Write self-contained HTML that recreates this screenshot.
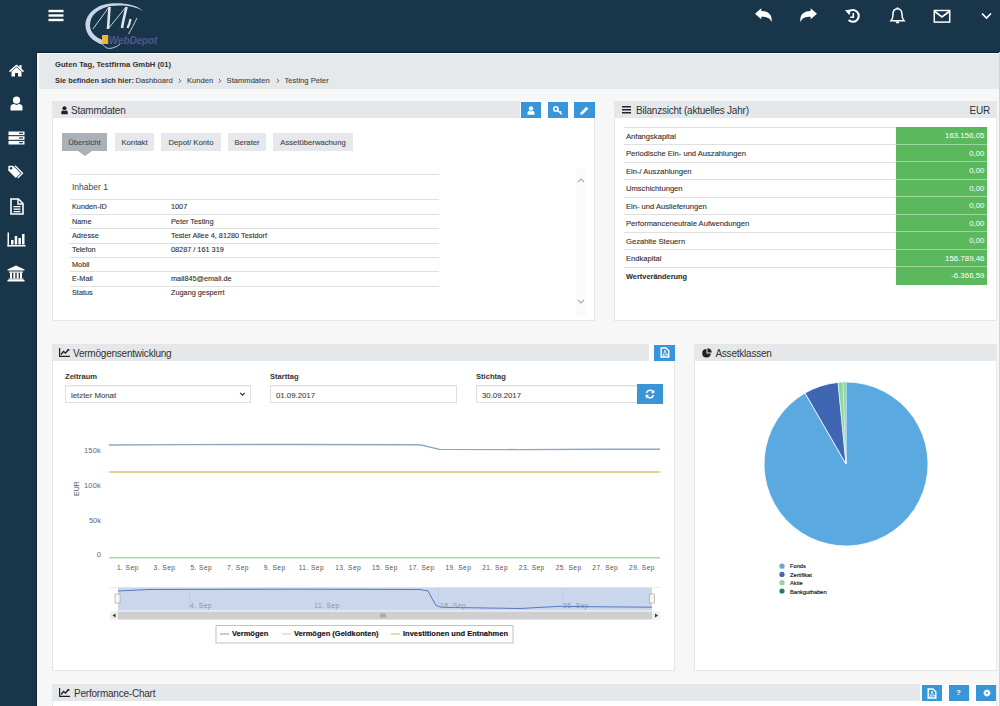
<!DOCTYPE html>
<html><head><meta charset="utf-8">
<style>
*{box-sizing:border-box;margin:0;padding:0}
html,body{width:1000px;height:706px;overflow:hidden;background:#f7f7f7;font-family:"Liberation Sans",sans-serif;color:#333}
.abs{position:absolute}
svg{position:absolute;overflow:visible}
#hdr{left:0;top:0;width:1000px;height:53px;background:#193549;border-bottom:1px solid #0d2232}
#side{left:0;top:52px;width:37px;height:654px;background:#193549;border-right:1px solid #0f2536}
#greet{left:38.5px;top:54px;width:961.5px;height:35px;background:#e5e9eb}
.panel{position:absolute;background:#fff;border:1px solid #e6e6e6}
.ph{position:absolute;left:0;top:0;right:0;height:16px;background:#e4e8eb;font-size:10px;color:#333}
.ph .t{position:absolute;top:3px;white-space:nowrap;letter-spacing:-0.22px}
.btn{position:absolute;background:#3895d8;height:16px;top:0}
.bw{position:absolute;top:-1px;right:0;height:17px;background:#fbfcfd}
.tab{-webkit-text-stroke:0.1px #444;position:absolute;top:133px;height:18px;background:#e6e8eb;font-size:7.7px;color:#444;text-align:center;line-height:20px;white-space:nowrap}
.hl{position:absolute;left:70px;width:369px;height:1px;background:#e0e0e0}
.lbl{-webkit-text-stroke:0.12px #333;position:absolute;font-size:7.3px;color:#333;white-space:nowrap;line-height:9px}
.brow{position:absolute;left:624px;width:363px;height:1px;background:#e0e0e0}
.bl{-webkit-text-stroke:0.12px #333;position:absolute;left:626px;font-size:7.6px;color:#333;white-space:nowrap;line-height:9px}
.g{position:absolute;left:896px;width:91px;height:16.5px;background:#5cb85c;color:#fff;font-size:7.9px;text-align:right;padding-right:2.5px;line-height:17.5px}
.gs{position:absolute;left:896px;width:91px;height:1px;background:#9ad79a}
.xl{position:absolute;top:564px;width:40px;text-align:center;font-size:6.6px;color:#555;white-space:nowrap;letter-spacing:0.45px}
.yl{position:absolute;font-size:7.5px;color:#666;white-space:nowrap;text-align:right;width:30px}
.fl{position:absolute;margin-top:1px;font-size:7.6px;font-weight:bold;color:#333;white-space:nowrap}
.inp{-webkit-text-stroke:0.1px #444;position:absolute;top:384.6px;height:18.6px;background:#fff;border:1px solid #e0e0e0;box-shadow:inset 0 1px 1px rgba(0,0,0,.05);font-size:7.8px;color:#444;line-height:19.5px;padding-left:5px;white-space:nowrap}
.leg{-webkit-text-stroke:0.15px #111;position:absolute;font-size:7.5px;font-weight:bold;color:#111;white-space:nowrap;top:628.8px}
.bc{-webkit-text-stroke:0.1px #444;top:75.5px;font-size:7.6px;color:#444;white-space:nowrap}
.bcs{top:73px;font-size:9.5px;color:#555;white-space:nowrap}
.pl{position:absolute;left:790px;font-size:5.7px;color:#111;white-space:nowrap;-webkit-text-stroke:0.15px #111}
</style></head><body>
<div id="hdr" class="abs"></div>
<div id="side" class="abs"></div>
<div id="greet" class="abs"></div>
<div class="abs" style="left:999px;top:52px;width:1px;height:654px;background:#d4d4d4"></div>

<!-- header icons -->
<svg style="left:48px;top:9px" width="16" height="13" viewBox="0 0 16 13"><rect x="0.5" y="0.8" width="15" height="2.4" fill="#fff"/><rect x="0.5" y="5.3" width="15" height="2.4" fill="#fff"/><rect x="0.5" y="9.8" width="15" height="2.4" fill="#fff"/></svg>

<!-- logo -->
<svg style="left:80px;top:0" width="85" height="52" viewBox="0 0 85 52">
  <path d="M63 11 C55 3.5 42 2.5 30 3.5 C15 5 5 15 5.5 26 C6 35 13 41.5 22 44.5 L22.5 40 C15 37 10 32 10 25 C10 15 19 8 31 6 C43 4.5 55 6 63 11Z" fill="#c6d6e8"/>
  <path d="M22 43 C24 47 27 49 31 48.3 C35 47.5 38 46 40 44" fill="none" stroke="#b9cbe0" stroke-width="1"/>
  <path d="M13 29 L29 7" stroke="#dde6ef" stroke-width="0.9" fill="none"/>
  <path d="M29.5 7 C29 14 28.5 21 28 29" stroke="#dde6ef" stroke-width="2.6" fill="none"/>
  <path d="M28 29 L46 7" stroke="#dde6ef" stroke-width="0.9" fill="none"/>
  <path d="M46.5 7 C45 14 43 21 42 28" stroke="#dde6ef" stroke-width="2.6" fill="none"/>
  <path d="M50.5 19 C50 23 48.5 26 47.5 28" stroke="#dde6ef" stroke-width="2.2" fill="none"/>
  <path d="M57 18 C54 24 51 30 48.5 34" stroke="#dde6ef" stroke-width="0.9" fill="none"/>
  <rect x="22" y="35" width="6.2" height="9" fill="#efb43a"/>
  <text x="28.8" y="44" font-family="Liberation Sans" font-style="italic" font-weight="bold" font-size="10" fill="#50568e" letter-spacing="-0.1">WebDepot</text>
</svg>

<svg style="left:755px;top:8px" width="17" height="15" viewBox="0 0 17 15"><path d="M0 5.8 L6.3 0.3 V3 C12.5 3 17.8 6 16.5 14.2 C15 9.8 11.5 8.8 6.3 8.8 V11.3 Z" fill="#fff"/></svg>
<svg style="left:800px;top:8px" width="17" height="15" viewBox="0 0 17 15"><path d="M17 5.8 L10.7 0.3 V3 C4.5 3 -0.8 6 0.5 14.2 C2 9.8 5.5 8.8 10.7 8.8 V11.3 Z" fill="#fff"/></svg>
<svg style="left:844px;top:8px" width="18" height="18" viewBox="0 0 18 18"><path d="M5 3.4 A5.9 5.9 0 1 1 4.6 12" fill="none" stroke="#fff" stroke-width="2"/><path d="M1 2.3 L6.6 1.6 L5.6 7.2 Z" fill="#fff"/><path d="M9.3 5 V9.3 H6.2" fill="none" stroke="#fff" stroke-width="1.6"/></svg>
<svg style="left:889px;top:7px" width="17" height="18" viewBox="0 0 17 18"><path d="M8.5 1.8 C5.5 1.8 4 4 4 7.5 C4 11 3.2 12.5 2 13.8 H15 C13.8 12.5 13 11 13 7.5 C13 4 11.5 1.8 8.5 1.8Z" fill="none" stroke="#fff" stroke-width="1.5"/><circle cx="8.5" cy="1.3" r="1" fill="#fff"/><path d="M6.5 14.5 A2 2 0 0 0 10.5 14.5Z" fill="#fff"/></svg>
<svg style="left:933px;top:9px" width="18" height="14" viewBox="0 0 18 14"><rect x="1.3" y="1.5" width="15.4" height="11.6" fill="none" stroke="#fff" stroke-width="1.5"/><path d="M1.8 2.5 L9 8 L16.2 2.5" fill="none" stroke="#fff" stroke-width="1.6"/></svg>
<svg style="left:981px;top:12px" width="11" height="8" viewBox="0 0 11 8"><path d="M1 1.5 L5.5 6 L10 1.5" fill="none" stroke="#fff" stroke-width="1.7"/></svg>

<!-- sidebar icons -->
<svg style="left:9px;top:64px" width="15" height="13" viewBox="0 0 15 13"><path d="M7.5 0.5 L0 7 L1 8.2 L7.5 2.6 L14 8.2 L15 7 L12.5 4.8 V1 H10.5 V3 Z" fill="#fff"/><path d="M2.5 7.5 L7.5 3.3 L12.5 7.5 V12.6 H9 V9 H6 V12.6 H2.5Z" fill="#fff"/></svg>
<svg style="left:10px;top:96px" width="13" height="15" viewBox="0 0 13 15"><circle cx="6.5" cy="4.2" r="3.6" fill="#fff"/><path d="M0.5 14.5 V11 C0.5 8.8 2.5 8 4 8 L6.5 9 L9 8 C10.5 8 12.5 8.8 12.5 11 V14.5Z" fill="#fff"/></svg>
<svg style="left:8px;top:131px" width="17" height="14" viewBox="0 0 17 14"><rect x="0.5" y="0.5" width="16" height="3.6" fill="#fff"/><rect x="0.5" y="5.2" width="16" height="3.6" fill="#fff"/><rect x="0.5" y="9.9" width="16" height="3.6" fill="#fff"/><rect x="11" y="1.7" width="4" height="1.2" fill="#193549"/><rect x="11" y="6.4" width="4" height="1.2" fill="#193549"/><rect x="11" y="11.1" width="4" height="1.2" fill="#193549"/></svg>
<svg style="left:8px;top:165px" width="17" height="14" viewBox="0 0 17 14"><path d="M0.3 1.5 V5.5 L7.8 13 L12.5 8.3 L5 0.8 H1 Z" fill="#fff"/><circle cx="3" cy="3.3" r="1.2" fill="#193549"/><path d="M7 0.8 L14.5 8.3 L9.8 13" fill="none" stroke="#fff" stroke-width="1.3"/></svg>
<svg style="left:10px;top:198px" width="14" height="17" viewBox="0 0 14 17"><path d="M1 1 H8.5 L13 5.5 V16 H1Z" fill="none" stroke="#fff" stroke-width="1.6"/><path d="M8 1 V6 H13" fill="none" stroke="#fff" stroke-width="1.4"/><rect x="3.5" y="8" width="7" height="1.3" fill="#fff"/><rect x="3.5" y="10.5" width="7" height="1.3" fill="#fff"/><rect x="3.5" y="13" width="7" height="1.3" fill="#fff"/></svg>
<svg style="left:7px;top:232px" width="19" height="15" viewBox="0 0 19 15"><rect x="0.5" y="0.5" width="1.5" height="14" fill="#fff"/><rect x="0.5" y="13" width="18" height="1.5" fill="#fff"/><rect x="4" y="8" width="2.5" height="4.5" fill="#fff"/><rect x="7.7" y="4" width="2.5" height="8.5" fill="#fff"/><rect x="11.4" y="6" width="2.5" height="6.5" fill="#fff"/><rect x="15" y="2" width="2.5" height="10.5" fill="#fff"/></svg>
<svg style="left:7px;top:265px" width="18" height="17" viewBox="0 0 18 17"><path d="M9 0.5 L17.5 4.5 V5.5 H0.5 V4.5Z" fill="#fff"/><rect x="2" y="6.5" width="14" height="1.2" fill="#fff"/><rect x="3" y="7.5" width="2" height="6" fill="#fff"/><rect x="6.3" y="7.5" width="2" height="6" fill="#fff"/><rect x="9.7" y="7.5" width="2" height="6" fill="#fff"/><rect x="13" y="7.5" width="2" height="6" fill="#fff"/><rect x="1.5" y="13.5" width="15" height="1.3" fill="#fff"/><rect x="0.5" y="15" width="17" height="1.5" fill="#fff"/></svg>

<div class="abs" style="left:55px;top:59.5px;font-size:7.65px;font-weight:bold;color:#333;white-space:nowrap">Guten Tag, Testfirma GmbH (01)</div>
<div class="abs" style="left:55px;top:75.5px;font-size:7.4px;font-weight:bold;color:#333;white-space:nowrap">Sie befinden sich hier:</div>
<div class="abs bc" style="left:135.5px">Dashboard</div><svg style="left:177.7px;top:78px" width="4" height="6" viewBox="0 0 4 6"><path d="M0.8 0.8 L2.8 2.8 L0.8 4.8" fill="none" stroke="#555" stroke-width="0.9"/></svg>
<div class="abs bc" style="left:187px">Kunden</div><svg style="left:217.7px;top:78px" width="4" height="6" viewBox="0 0 4 6"><path d="M0.8 0.8 L2.8 2.8 L0.8 4.8" fill="none" stroke="#555" stroke-width="0.9"/></svg>
<div class="abs bc" style="left:226.6px">Stammdaten</div><svg style="left:275.7px;top:78px" width="4" height="6" viewBox="0 0 4 6"><path d="M0.8 0.8 L2.8 2.8 L0.8 4.8" fill="none" stroke="#555" stroke-width="0.9"/></svg>
<div class="abs bc" style="left:284.5px">Testing Peter</div>

<!-- Stammdaten panel -->
<div class="panel" style="left:52px;top:101px;width:543px;height:220px">
  <div class="ph"><span class="t" style="left:18px">Stammdaten</span>
  <div class="bw" style="left:466.5px"></div>
  <div class="btn" style="left:468px;width:20px"></div>
  <div class="btn" style="left:495px;width:20px"></div>
  <div class="btn" style="left:521px;width:21px"></div>
  </div>
</div>
<svg style="left:61px;top:106px" width="7" height="8.5" viewBox="0 0 8 10"><circle cx="4" cy="2.6" r="2.4" fill="#222"/><path d="M0.2 9.6 V7.3 C0.2 5.8 1.3 5.2 2.3 5.2 L4 6 L5.7 5.2 C6.7 5.2 7.8 5.8 7.8 7.3 V9.6Z" fill="#222"/></svg>
<!-- button icons -->
<svg style="left:527px;top:105.5px" width="8" height="9" viewBox="0 0 8 9"><circle cx="4" cy="2.5" r="2.2" fill="#fff"/><path d="M0.5 8.8 V6.8 C0.5 5.5 1.5 4.9 2.4 4.9 L4 5.6 L5.6 4.9 C6.5 4.9 7.5 5.5 7.5 6.8 V8.8Z" fill="#fff"/></svg>
<svg style="left:553px;top:106px" width="10" height="9" viewBox="0 0 10 9"><circle cx="2.9" cy="2.9" r="2.1" fill="none" stroke="#fff" stroke-width="1.6"/><path d="M4.3 4.3 L8.8 8.3 M6.8 6.6 L8 5.4" stroke="#fff" stroke-width="1.5"/></svg>
<svg style="left:580px;top:106px" width="9" height="9" viewBox="0 0 9 9"><path d="M0.3 8.7 L0.8 6.2 L6.3 0.7 L8.3 2.7 L2.8 8.2 Z" fill="#fff"/></svg>

<div class="tab" style="left:62px;width:45px;background:#aab1b9;color:#4a4f55">Übersicht</div>
<svg style="left:77.5px;top:151px" width="14" height="5" viewBox="0 0 14 5"><path d="M0 0 H14 L7 5Z" fill="#aab1b9"/></svg>
<div class="tab" style="left:115px;width:39px">Kontakt</div>
<div class="tab" style="left:161px;width:60px">Depot/ Konto</div>
<div class="tab" style="left:228px;width:38px">Berater</div>
<div class="tab" style="left:273px;width:80px">Assetüberwachung</div>

<div class="hl" style="top:174px"></div>
<div class="lbl" style="left:72px;top:182px;font-size:8.5px;line-height:10px;color:#444;-webkit-text-stroke:0">Inhaber 1</div>
<div class="hl" style="top:199px"></div>
<div class="lbl" style="left:72px;top:202px">Kunden-ID</div><div class="lbl" style="left:171px;top:202px">1007</div>
<div class="hl" style="top:213.5px"></div>
<div class="lbl" style="left:72px;top:216.5px">Name</div><div class="lbl" style="left:171px;top:216.5px">Peter Testing</div>
<div class="hl" style="top:228px"></div>
<div class="lbl" style="left:72px;top:231px">Adresse</div><div class="lbl" style="left:171px;top:231px">Tester Allee 4, 81280 Testdorf</div>
<div class="hl" style="top:242.5px"></div>
<div class="lbl" style="left:72px;top:245px">Telefon</div><div class="lbl" style="left:171px;top:245px">08287 / 161 319</div>
<div class="hl" style="top:256.5px"></div>
<div class="lbl" style="left:72px;top:259.5px">Mobil</div>
<div class="hl" style="top:271px"></div>
<div class="lbl" style="left:72px;top:273.5px">E-Mail</div><div class="lbl" style="left:171px;top:273.5px">mail845@email.de</div>
<div class="hl" style="top:285.5px"></div>
<div class="lbl" style="left:72px;top:288px">Status</div><div class="lbl" style="left:171px;top:288px">Zugang gesperrt</div>
<!-- scrollbar -->
<div class="abs" style="left:576px;top:168px;width:10px;height:148px;background:#fafafa"></div>
<svg style="left:577px;top:178px" width="8" height="5" viewBox="0 0 8 5"><path d="M1 4 L4 1 L7 4" fill="none" stroke="#aaa" stroke-width="1.1"/></svg>
<svg style="left:577px;top:299px" width="8" height="5" viewBox="0 0 8 5"><path d="M1 1 L4 4 L7 1" fill="none" stroke="#aaa" stroke-width="1.1"/></svg>

<!-- Bilanzsicht panel -->
<div class="panel" style="left:614px;top:101px;width:383px;height:220px">
  <div class="ph"><span class="t" style="left:21px">Bilanzsicht (aktuelles Jahr)</span><span class="t" style="right:6px">EUR</span></div>
</div>
<svg style="left:622px;top:105px" width="9" height="9" viewBox="0 0 9 9"><rect x="0" y="1" width="9" height="1.5" fill="#222"/><rect x="0" y="4" width="9" height="1.5" fill="#222"/><rect x="0" y="7" width="9" height="1.5" fill="#222"/></svg>
<div class="brow" style="top:126.5px"></div>
<div class="bl" style="top:131.8px">Anfangskapital</div><div class="g" style="top:127px">163.156,05</div>
<div class="brow" style="top:144px"></div><div class="gs" style="top:143.5px"></div>
<div class="bl" style="top:149.3px">Periodische Ein- und Auszahlungen</div><div class="g" style="top:144.5px">0,00</div>
<div class="brow" style="top:161.5px"></div><div class="gs" style="top:161px"></div>
<div class="bl" style="top:166.8px">Ein-/ Auszahlungen</div><div class="g" style="top:162px">0,00</div>
<div class="brow" style="top:179px"></div><div class="gs" style="top:178.5px"></div>
<div class="bl" style="top:184.3px">Umschichtungen</div><div class="g" style="top:179.5px">0,00</div>
<div class="brow" style="top:196.5px"></div><div class="gs" style="top:196px"></div>
<div class="bl" style="top:201.8px">Ein- und Auslieferungen</div><div class="g" style="top:197px">0,00</div>
<div class="brow" style="top:214px"></div><div class="gs" style="top:213.5px"></div>
<div class="bl" style="top:219.3px">Performanceneutrale Aufwendungen</div><div class="g" style="top:214.5px">0,00</div>
<div class="brow" style="top:231.5px"></div><div class="gs" style="top:231px"></div>
<div class="bl" style="top:236.8px">Gezahlte Steuern</div><div class="g" style="top:232px">0,00</div>
<div class="brow" style="top:249px"></div><div class="gs" style="top:248.5px"></div>
<div class="bl" style="top:254.3px">Endkapital</div><div class="g" style="top:249.5px">156.789,46</div>
<div class="brow" style="top:266.5px"></div><div class="gs" style="top:266px"></div>
<div class="bl" style="top:271.8px;font-weight:bold;font-size:7.4px">Wertveränderung</div><div class="g" style="top:267px;height:18px;line-height:18.5px">-6.366,59</div>

<!-- Vermoegen panel -->
<div class="panel" style="left:52px;top:344px;width:623px;height:327px">
  <div class="ph"><span class="t" style="left:20px">Vermögensentwicklung</span>
  <div class="bw" style="left:595.5px"></div>
  <div class="btn" style="left:601px;width:21px"></div></div>
</div>
<svg style="left:59px;top:348px" width="11" height="9" viewBox="0 0 11 9"><path d="M0.6 0 V8.3 H11" fill="none" stroke="#222" stroke-width="1.2"/><path d="M2 6.5 L4.5 3.5 L6.5 5 L9.5 1.5" fill="none" stroke="#222" stroke-width="1.3"/><path d="M8 1 H10.3 V3.3Z" fill="#222"/></svg>
<svg style="left:659.5px;top:347px" width="10" height="11" viewBox="0 0 10 11"><path d="M1.2 1 H6 L8.8 3.8 V10 H1.2Z" fill="none" stroke="#fff" stroke-width="1.4"/><path d="M3 8.5 C4 6 5 4 5 3 C5 5 6 7 8 8 C6 7.5 4 8 3 8.5Z" fill="none" stroke="#fff" stroke-width="0.8"/></svg>

<div class="fl" style="top:371px;left:65px">Zeitraum</div>
<div class="fl" style="top:371px;left:270px">Starttag</div>
<div class="fl" style="top:371px;left:476px">Stichtag</div>
<div class="inp" style="left:65px;width:186px">letzter Monat</div>
<svg style="left:238.8px;top:392.3px" width="7" height="5" viewBox="0 0 7 5"><path d="M1.2 0.9 L3.5 3.2 L5.8 0.9" fill="none" stroke="#333" stroke-width="1.3"/></svg>
<div class="inp" style="left:270px;width:187px">01.09.2017</div>
<div class="inp" style="left:476px;width:162px">30.09.2017</div>
<div class="abs" style="left:637px;top:384px;width:26px;height:20px;background:#3895d8"></div>
<svg style="left:645px;top:389px" width="10" height="10" viewBox="0 0 10 10"><path d="M1.5 4 A3.7 3.7 0 0 1 8.3 3" fill="none" stroke="#fff" stroke-width="1.5"/><path d="M8.5 6 A3.7 3.7 0 0 1 1.7 7" fill="none" stroke="#fff" stroke-width="1.5"/><path d="M9.3 0.8 V4.2 H6Z" fill="#fff"/><path d="M0.7 9.2 V5.8 H4Z" fill="#fff"/></svg>

<!-- Assetklassen -->
<div class="panel" style="left:694px;top:344px;width:303px;height:327px">
  <div class="ph"><span class="t" style="left:20.4px">Assetklassen</span></div>
</div>
<!-- chart -->
<div class="yl" style="left:71px;top:445.5px;letter-spacing:0.2px">150k</div>
<div class="yl" style="left:71px;top:481px;letter-spacing:0.2px">100k</div>
<div class="yl" style="left:71px;top:515.5px">50k</div>
<div class="yl" style="left:71px;top:550px">0</div>
<div class="abs" style="left:69px;top:485px;font-size:7px;color:#555;transform:rotate(-90deg);transform-origin:center;white-space:nowrap">EUR</div>
<svg style="left:0;top:0" width="1000" height="706" viewBox="0 0 1000 706">
  <path d="M109 445 L180 444.6 L300 444.5 L415 444.8 L421 445 L439.5 449.4 L520 449.6 L600 449.2 L660 449.3" fill="none" stroke="#8aa8c4" stroke-width="1.4"/>
  <path d="M109 472 H660" stroke="#e9bc74" stroke-width="1.3"/>
  <path d="M109 557.8 H660" stroke="#a9d9a9" stroke-width="1.4"/>
  <!-- navigator -->
  <rect x="118" y="587.5" width="534" height="23" fill="#c9d6ec"/>
  <path d="M118 591 L150 589.5 L300 589.2 L420 589.5 L428 591 L436 605.5 L442 607.3 L520 608.5 L560 606.3 L600 606.8 L652 607.2" fill="none" stroke="#5a78c0" stroke-width="1"/>
  <path d="M110 587.5 H660" stroke="#ddd" stroke-width="0.6"/>
  <path d="M189.5 588 V610 M438.5 588 V610 M563 588 V610" stroke="#b8c4dc" stroke-width="0.5"/>
  <rect x="115" y="594" width="5" height="9" fill="#f5f5f5" stroke="#999" stroke-width="0.6"/>
  <rect x="649.5" y="594" width="5" height="9" fill="#f5f5f5" stroke="#999" stroke-width="0.6"/>
  <rect x="110" y="611.5" width="550" height="8" fill="#eee"/>
  <rect x="118" y="611.5" width="534" height="8" fill="#cfcfcf"/>
  <path d="M381 613.5 V617.5 M383 613.5 V617.5 M385 613.5 V617.5" stroke="#555" stroke-width="0.6"/>
  <path d="M115.5 613.5 L112.5 615.5 L115.5 617.5Z" fill="#333"/>
  <path d="M655 613.5 L658 615.5 L655 617.5Z" fill="#333"/>
  <!-- legend -->
  <rect x="216" y="625.6" width="297" height="17.4" fill="#fff" stroke="#bbb" stroke-width="0.9"/>
  <path d="M220 634 H229" stroke="#98acc0" stroke-width="1.2"/>
  <path d="M282 634 H291" stroke="#c4e0b4" stroke-width="1.2"/>
  <path d="M391 634 H400" stroke="#e9bc74" stroke-width="1.2"/>
  <!-- pie -->
  <g transform="translate(846,464)">
    <path d="M0 0 L0 -82 A82 82 0 1 1 -41 -71 Z" fill="#5aa9e0" stroke="#fff" stroke-width="0.8"/>
    <path d="M0 0 L-41 -71 A82 82 0 0 1 -7.9 -81.6 Z" fill="#3f66b3" stroke="#fff" stroke-width="0.8"/>
    <path d="M0 0 L-7.9 -81.6 A82 82 0 0 1 -2.9 -81.9 Z" fill="#8ed6a0" stroke="#fff" stroke-width="0.5"/>
    <path d="M0 0 L-2.9 -81.9 A82 82 0 0 1 0 -82 Z" fill="#8ed6a0" stroke="#fff" stroke-width="0.3"/>
  </g>
  <circle cx="782" cy="566.2" r="2.6" fill="#62a6d8"/>
  <circle cx="782" cy="574.4" r="2.6" fill="#4468ad"/>
  <circle cx="782" cy="582.7" r="2.6" fill="#a0cca6"/>
  <circle cx="782" cy="591" r="2.6" fill="#1b8266"/>
</svg>
<div class="xl" style="left:107.8px">1. Sep</div>
<div class="xl" style="left:144.5px">3. Sep</div>
<div class="xl" style="left:181.3px">5. Sep</div>
<div class="xl" style="left:218.0px">7. Sep</div>
<div class="xl" style="left:254.7px">9. Sep</div>
<div class="xl" style="left:291.4px">11. Sep</div>
<div class="xl" style="left:328.2px">13. Sep</div>
<div class="xl" style="left:364.9px">15. Sep</div>
<div class="xl" style="left:401.6px">17. Sep</div>
<div class="xl" style="left:438.4px">19. Sep</div>
<div class="xl" style="left:475.1px">21. Sep</div>
<div class="xl" style="left:511.8px">23. Sep</div>
<div class="xl" style="left:548.6px">25. Sep</div>
<div class="xl" style="left:585.3px">27. Sep</div>
<div class="xl" style="left:622.0px">29. Sep</div>
<div class="xl" style="left:181px;top:601.5px;color:#8894aa">4. Sep</div>
<div class="xl" style="left:307px;top:601.5px;color:#8894aa">11. Sep</div>
<div class="xl" style="left:433px;top:601.5px;color:#8894aa">18. Sep</div>
<div class="xl" style="left:556px;top:601.5px;color:#8894aa">25. Sep</div>
<div class="leg" style="left:232px">Vermögen</div>
<div class="leg" style="left:294px">Vermögen (Geldkonten)</div>
<div class="leg" style="left:403px">Investitionen und Entnahmen</div>

<svg style="left:701.5px;top:348px" width="10" height="10" viewBox="0 0 10 10"><path d="M4.5 1 A4.3 4.3 0 1 0 8.8 5.5 H4.5Z" fill="#222"/><path d="M5.5 0.2 A4.3 4.3 0 0 1 9.8 4.5 H5.5Z" fill="#222"/></svg>
<div class="pl" style="top:563px">Fonds</div>
<div class="pl" style="top:571.5px">Zertifikat</div>
<div class="pl" style="top:580px">Aktie</div>
<div class="pl" style="top:588.5px">Bankguthaben</div>

<!-- Performance -->
<div class="panel" style="left:52px;top:684px;width:945px;height:30px">
  <div class="ph"><span class="t" style="left:21px">Performance-Chart</span>
  <div class="bw" style="left:867px"></div>
  <div class="btn" style="left:869px;width:20px"></div>
  <div class="btn" style="left:896px;width:20px"></div>
  <div class="btn" style="left:923px;width:20px"></div>
  </div>
</div>
<svg style="left:59px;top:688px" width="11" height="9" viewBox="0 0 11 9"><path d="M0.6 0 V8.3 H11" fill="none" stroke="#222" stroke-width="1.2"/><path d="M2 6.5 L4.5 3.5 L6.5 5 L9.5 1.5" fill="none" stroke="#222" stroke-width="1.3"/><path d="M8 1 H10.3 V3.3Z" fill="#222"/></svg>
<svg style="left:926.5px;top:688px" width="10" height="11" viewBox="0 0 10 11"><path d="M1.2 1 H6 L8.8 3.8 V10 H1.2Z" fill="none" stroke="#fff" stroke-width="1.4"/><path d="M3 8.5 C4 6 5 4 5 3 C5 5 6 7 8 8 C6 7.5 4 8 3 8.5Z" fill="none" stroke="#fff" stroke-width="0.8"/></svg>
<div class="abs" style="left:948.5px;top:684.5px;width:20px;height:16px;color:#fff;font-size:8px;font-weight:bold;text-align:center;line-height:16px">?</div>
<svg style="left:982.5px;top:689px" width="8" height="8" viewBox="0 0 10 10"><circle cx="5" cy="5" r="3.3" fill="#fff"/><path d="M5 0.6 V9.4 M0.6 5 H9.4 M1.9 1.9 L8.1 8.1 M8.1 1.9 L1.9 8.1" stroke="#fff" stroke-width="1.8"/><circle cx="5" cy="5" r="1.3" fill="#3895d8"/></svg>
</body></html>
